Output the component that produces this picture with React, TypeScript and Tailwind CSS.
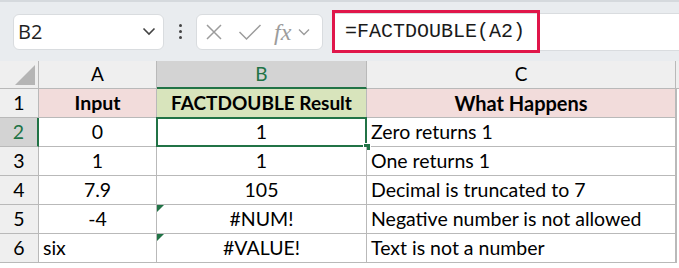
import React from "react"

const cellFont = { fontFamily: "Lato, 'Noto Sans', sans-serif" }

type Row = { n: number; a: string; b: string; c: string; aLeft?: boolean; err?: boolean }

const rows: Row[] = [
  { n: 2, a: "0", b: "1", c: "Zero returns 1" },
  { n: 3, a: "1", b: "1", c: "One returns 1" },
  { n: 4, a: "7.9", b: "105", c: "Decimal is truncated to 7" },
  { n: 5, a: "-4", b: "#NUM!", c: "Negative number is not allowed", err: true },
  { n: 6, a: "six", b: "#VALUE!", c: "Text is not a number", aLeft: true, err: true },
]

function Toolbar() {
  return (
    <div className="flex h-[61px] items-center border-t-2 border-[#d5d9dd] bg-[#e9ecef] pl-[13px]">
      {/* Name box */}
      <div className="flex h-[36px] w-[151px] items-center justify-between rounded-[6px] border border-[#d9dcdf] bg-white pl-[4px] pr-[7px]">
        <span className="text-[20px] text-[#1f1f1f]" style={{ fontFamily: "'Open Sans', sans-serif" }}>
          B2
        </span>
        <svg width="14" height="9" viewBox="0 0 14 9" fill="none" stroke="#444" strokeWidth="1.6">
          <path d="M1.5 1.5 L7 7 L12.5 1.5" />
        </svg>
      </div>
      {/* dots */}
      <div className="flex w-[32px] flex-col items-center gap-[3px]">
        <span className="h-[3px] w-[3px] rounded-full bg-[#444]" />
        <span className="h-[3px] w-[3px] rounded-full bg-[#444]" />
        <span className="h-[3px] w-[3px] rounded-full bg-[#444]" />
      </div>
      {/* formula buttons */}
      <div className="flex h-[36px] w-[127px] items-center rounded-[6px] border border-[#d9dcdf] bg-white pl-[8px]">
        <svg width="18" height="18" viewBox="0 0 18 18" fill="none" stroke="#9c9c9c" strokeWidth="1.5">
          <path d="M2 2 L16 16 M16 2 L2 16" />
        </svg>
        <svg className="ml-[15px]" width="24" height="18" viewBox="0 0 24 18" fill="none" stroke="#9c9c9c" strokeWidth="1.5">
          <path d="M1.5 9 L8.5 16 L22.5 2" />
        </svg>
        <span
          className="ml-[12px] text-[24px] italic leading-none text-[#9c9c9c]"
          style={{ fontFamily: "'Liberation Serif', serif" }}
        >
          fx
        </span>
        <svg className="ml-[7px]" width="12" height="8" viewBox="0 0 12 8" fill="none" stroke="#9c9c9c" strokeWidth="1.4">
          <path d="M1 1.5 L6 6.5 L11 1.5" />
        </svg>
      </div>
      {/* formula input */}
      <div className="ml-[9px] flex h-[38px] flex-1 items-center border-y border-l border-[#d9dcdf] bg-white">
        <div className="-ml-[1px] flex h-[43px] w-[208px] items-center border-[3px] border-[#e0164a] pl-[10px]">
          <span className="text-[20px] text-[#1a1a1a]" style={{ fontFamily: "'Liberation Mono', monospace" }}>
            =FACTDOUBLE(A2)
          </span>
        </div>
      </div>
    </div>
  )
}

function Grid() {
  const line = "border-r border-b border-[#b9b9b9]"
  return (
    <div
      className="grid grid-cols-[39px_118px_210px_309px_3px] grid-rows-[28px_repeat(6,29px)] whitespace-nowrap text-[19.5px] text-black"
      style={cellFont}
    >
      {/* column headers */}
      <div className={`relative ${line} bg-[#efefef]`}>
        <svg className="absolute right-[3px] bottom-[3px]" width="20" height="20" viewBox="0 0 20 20">
          <path d="M20 0 L20 20 L0 20 Z" fill="#b5b5b5" />
        </svg>
      </div>
      <div className={`flex items-center justify-center ${line} bg-[#efefef] text-[19px]`}>A</div>
      <div className="flex items-center justify-center border-r border-b-2 border-r-[#b9b9b9] border-b-[#217346] bg-[#d3d3d3] text-[19px] text-[#217346]">
        B
      </div>
      <div className={`flex items-center justify-center ${line} bg-[#efefef] text-[19px]`}>C</div>
      <div className="bg-[#efefef] border-b border-[#b9b9b9]" />

      {/* row 1 */}
      <div className={`flex items-center justify-center ${line} bg-[#efefef]`}>1</div>
      <div className={`flex items-center justify-center ${line} bg-[#f2dcdb] text-[19.5px] font-bold`}>Input</div>
      <div className={`flex items-center justify-center ${line} bg-[#d8e4bc] text-[19px] font-bold`}>FACTDOUBLE Result</div>
      <div className={`flex items-center justify-center ${line} bg-[#f2dcdb] text-[20px] font-bold`}>What Happens</div>
      <div className="border-l border-[#b9b9b9]" />

      {rows.map((r) => {
        const sel = r.n === 2
        return (
          <React.Fragment key={r.n}>
            <div
              className={
                sel
                  ? "flex items-center justify-center border-r-2 border-b border-r-[#217346] border-b-[#b9b9b9] bg-[#d3d3d3] text-[#217346]"
                  : `flex items-center justify-center ${line} bg-[#efefef]`
              }
            >
              {r.n}
            </div>
            <div className={`flex items-center ${r.aLeft ? "justify-start pl-[4px]" : "justify-center"} ${line} bg-white`}>
              {r.a}
            </div>
            <div className={`relative flex items-center justify-center ${line} bg-white`}>
              {sel && (
                <>
                  <div className="absolute -top-[1px] -left-[1px] -right-[1px] -bottom-[1px] border-2 border-[#217346]" />
                  <div className="absolute -right-[5px] -bottom-[5px] h-[8px] w-[8px] border border-white bg-[#217346]" />
                </>
              )}
              {r.err && (
                <svg className="absolute top-0 left-0" width="7" height="7" viewBox="0 0 7 7">
                  <path d="M0 0 L7 0 L0 7 Z" fill="#217346" />
                </svg>
              )}
              {r.b}
            </div>
            <div className={`flex items-center justify-start overflow-hidden pl-[4px] ${line} bg-white`}>{r.c}</div>
            <div className="border-l border-[#b9b9b9]" />
          </React.Fragment>
        )
      })}
    </div>
  )
}

export default function App() {
  return (
    <div className="h-[268px] w-[679px] overflow-hidden bg-white">
      <Toolbar />
      <Grid />
    </div>
  )
}
